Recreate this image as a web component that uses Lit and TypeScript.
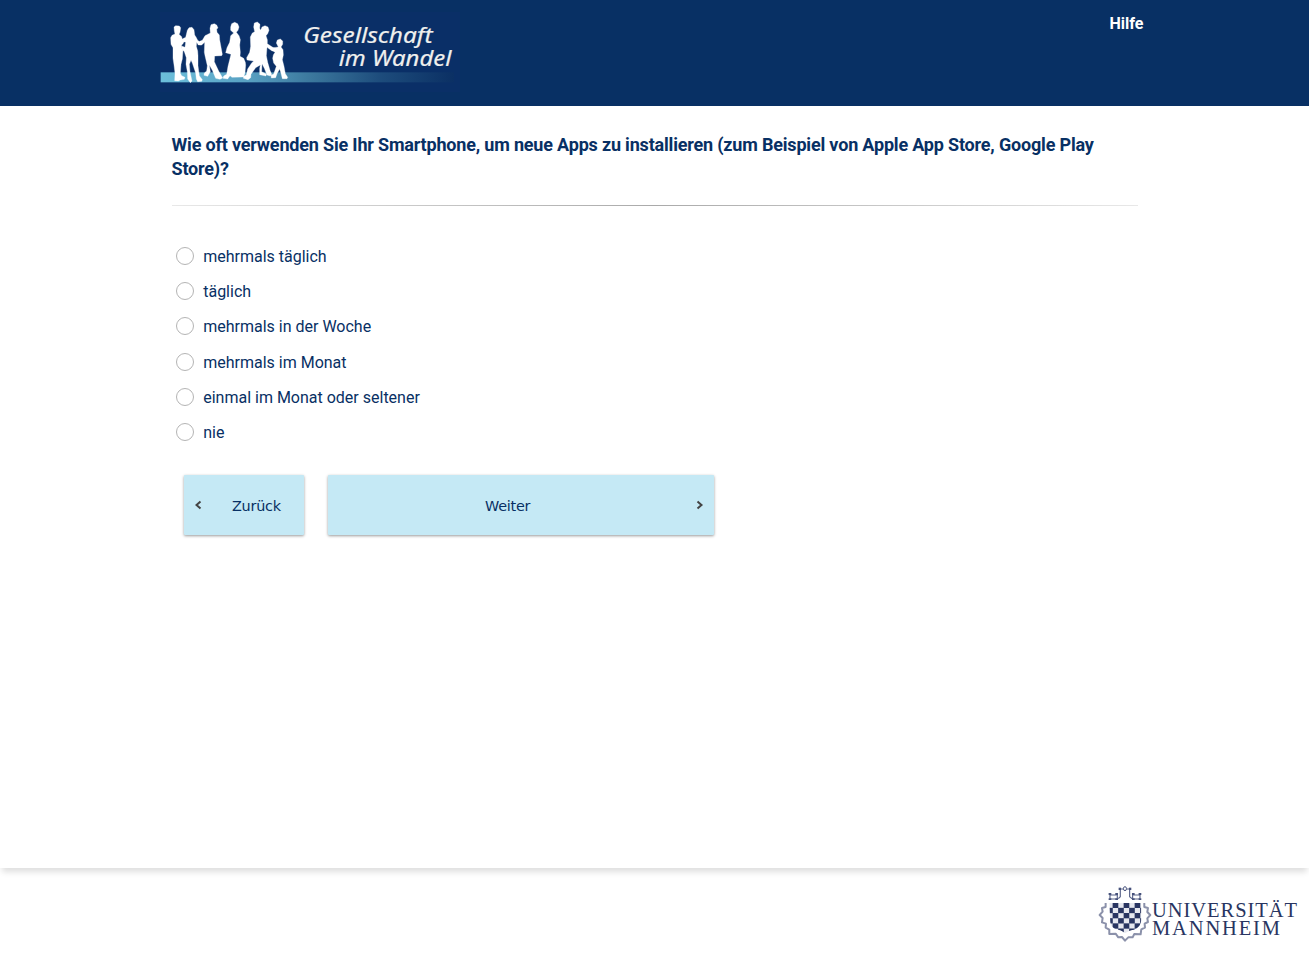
import { LitElement, html, css, svg } from "lit";
import { customElement, state } from "lit/decorators.js";

@customElement("wandel-logo")
class WandelLogo extends LitElement {
  static styles = css`
    :host { display: block; width: 300px; height: 80px; }
    svg { display: block; }
    .word { font: italic 400 64px "Noto Sans", "Open Sans", sans-serif; fill: #f0f0ee; stroke: #f0f0ee; stroke-width: .6; }
  `;
  render() {
    return html`<svg width="300" height="80" viewBox="15 21 900 240" role="img" aria-label="Gesellschaft im Wandel">
      <defs>
        <linearGradient id="band" x1="0" x2="1" y1="0" y2="0">
          <stop offset="0" stop-color="#6cbfdb"></stop>
          <stop offset=".3" stop-color="#58a0c2"></stop>
          <stop offset=".5" stop-color="#3d7a9f"></stop>
          <stop offset=".75" stop-color="#1d4c7c"></stop>
          <stop offset="1" stop-color="#0b3064"></stop>
        </linearGradient>
      </defs>
      <rect x="15" y="21" width="900" height="240" fill="#0a2f67"></rect>
      <rect x="17" y="202" width="880" height="30" fill="url(#band)"></rect>
      <g fill="#fff" stroke="#fff" stroke-width="1" stroke-linejoin="round">
        <path d="M57 66L62 62 73 63 77 68 75 82 72 88 80 95 82 104 88 108 84 116 80 120 79 128 84 134 82 162 78 178 76 205 80 212 90 217 88 223 76 225 70 228 59 227 60 205 57 180 54 160 54 128 48 118 47 98 51 91 60 87 58 78Z"></path>
        <path d="M97 76L102 68 111 67 117 74 119 90 123 96 128 106 136 112 142 112 138 120 130 120 125 112 124 124 128 138 129 152 129 182 133 212 142 224 140 229 128 230 124 222 122 204 112 174 108 166 103 178 105 200 111 228 106 233 98 222 97 200 93 178 94 158 88 140 78 130 80 123 90 127 92 112 86 110 80 103 92 97Z"></path>
        <path d="M165 70L168 59 178 56 185 60 189 69 185 72 186 82 193 90 194 104 202 148 200 152 179 153 178 170 191 198 203 219 195 223 182 220 172 196 163 180 166 200 158 214 147 211 148 204 155 198 157 182 150 152 148 142 149 112 140 120 130 118 134 109 142 106 150 92 166 84Z"></path>
        <path d="M227 66L230 56 239 52 248 56 252 66 249 76 244 82 252 92 256 104 254 120 256 142 255 154 266 160 271 172 272 180 270 204 266 216 231 217 225 212 218 222 204 220 206 213 215 208 219 184 228 148 212 143 216 128 224 112 227 92 236 84 227 76Z"></path>
        <path d="M296 66L298 54 307 51 315 58 314 70 317 76 321 66 330 62 339 66 342 76 338 86 333 92 337 104 337 116 352 126 366 133 364 142 350 137 336 127 334 152 338 172 345 196 350 208 346 213 336 210 328 190 321 176 320 200 334 207 333 213 314 209 314 190 316 180 302 188 288 208 287 218 279 224 265 220 266 214 274 210 278 192 290 174 296 168 276 165 275 158 284 142 287 124 286 96 292 84 299 80Z"></path>
        <path d="M364 114L367 105 376 102 383 108 383 118 378 126 384 134 385 150 382 164 387 184 391 206 398 217 396 221 382 221 378 205 374 192 366 206 362 218 349 219 348 211 356 207 364 184 356 174 353 160 355 150 360 142 354 136 356 128 370 126Z"></path>
      </g>
      <text class="word" x="445" y="114" textLength="388" lengthAdjust="spacingAndGlyphs">Gesellschaft</text>
      <text class="word" x="551" y="183" textLength="338" lengthAdjust="spacingAndGlyphs">im Wandel</text>
    </svg>`;
  }
}

@customElement("mannheim-logo")
class MannheimLogo extends LitElement {
  static styles = css`
    :host { display: block; }
    svg { display: block; }
    .name { font: 400 20.5px "Liberation Serif", serif; fill: #293561; }
  `;
  render() {
    const cells = [];
    for (let r = 0; r < 6; r++)
      for (let c = 0; c < 7; c++)
        if ((r + c) % 2 === 1) cells.push(svg`<rect x=${50.5 + c * 16.5} y=${83 + r * 15.5} width="17" height="16"></rect>`);
    return html`<svg width="212" height="62" viewBox="0 0 212 62" role="img" aria-label="Universität Mannheim">
      <g transform="translate(-6.7 -8) scale(.33333)">
        <defs><clipPath id="shield"><path d="M57 84H153V137Q150 157 131 164Q113 167 104 175Q98 167 83 164Q62 161 60 142Z"></path></clipPath></defs>
        <path d="M46 84V96L35 99 37 110 28 120 37 129 35 142 47 146 46 158 57 164 57 177 76 176 84 187 95 186 104 197 114 187 127 187 132 177 151 178 153 163 164 158 163 146 173 141 171 130 180 120 171 111 173 99 162 96V84" fill="none" stroke="#8b91aa" stroke-width="6" stroke-linejoin="round"></path>
        <g clip-path="url(#shield)"><rect x="50" y="80" width="110" height="100" fill="#e6e8ef"></rect><g fill="#293561">${cells}</g></g>
        <path d="M59 57V72H81V57M127 57V72H149V57M59 60H79M129 60H149M84 71L90 65V42H99M109 42H118V65L125 71" fill="none" stroke="#5a648a" stroke-width="3.5"></path>
        <ellipse cx="104" cy="41" rx="4.5" ry="6" fill="none" stroke="#46517b" stroke-width="3"></ellipse>
        <g fill="#46517b">
          <rect x="55" y="54" width="8" height="6"></rect><rect x="75" y="54" width="8" height="6"></rect>
          <rect x="125" y="54" width="8" height="6"></rect><rect x="145" y="54" width="8" height="6"></rect>
          <rect x="55" y="70" width="8" height="5"></rect><rect x="75" y="70" width="8" height="5"></rect>
          <rect x="125" y="70" width="8" height="5"></rect><rect x="145" y="70" width="8" height="5"></rect>
          <rect x="85" y="38" width="7" height="7"></rect><rect x="116" y="38" width="7" height="7"></rect>
        </g>
      </g>
      <text class="name" x="55" y="34" textLength="145" lengthAdjust="spacing">UNIVERSITÄT</text>
      <text class="name" x="55" y="52" textLength="128" lengthAdjust="spacing">MANNHEIM</text>
    </svg>`;
  }
}

@customElement("app-root")
class AppRoot extends LitElement {
  static styles = css`
    :host { display: flex; flex-direction: column; height: 954px; background: #fff; color: #083064; font: 16px/24px Roboto, sans-serif; overflow: hidden; }
    * { box-sizing: border-box; }
    header { height: 106px; flex: none; background: #083064; padding: 12px 165.6px 0 160px; display: flex; justify-content: space-between; }
    .help { color: #fff; font-weight: 700; text-decoration: none; height: 24px; }
    main { height: 762px; flex: none; padding: 27px 171px 0 171.5px; box-shadow: 0 6px 6px -2px rgba(0,0,0,.13); }
    h1 { margin: 0; font-size: 18px; line-height: 24px; font-weight: 700; height: 48px; letter-spacing: -.183px; }
    .rule { height: 1px; margin: 24px 0 33.3px; background: linear-gradient(90deg, #e8e8e8, #aaa 50%, #e8e8e8); }
    .options { display: grid; grid-auto-rows: 35.2px; }
    .option { display: flex; align-items: center; gap: 9.2px; padding-left: 4.5px; cursor: pointer; }
    .option span { padding-top: .3px; }
    .radio { appearance: none; width: 18px; height: 18px; margin: 0 0 1.6px; border: 1px solid #b4b4b4; border-radius: 50%; background: #fff; }
    .radio:checked { border: 5px solid #083064; }
    .actions { display: flex; gap: 24px; padding: 24.5px 0 0 12.5px; }
    .btn { height: 60px; border: 0; padding: 0; background: #c5e9f5; color: #083064; font: 14.4px "DejaVu Sans", sans-serif; letter-spacing: -.25px; box-shadow: 0 1px 3px rgba(0,0,0,.4); border-radius: 1px; display: flex; align-items: center; }
    .btn span { padding-top: 2px; }
    .back { width: 120px; padding-left: 11px; gap: 29px; }
    .next { width: 386px; padding: 0 10.5px 0 157px; justify-content: space-between; }
    .chev { width: 8px; height: 10px; margin-top: 1px; fill: none; stroke: #444; stroke-width: 2; }
    footer { flex: 1; display: flex; justify-content: flex-end; padding: 15px 0 0; }
  `;
  @state() private choice = -1;
  private options = ["mehrmals täglich", "täglich", "mehrmals in der Woche", "mehrmals im Monat", "einmal im Monat oder seltener", "nie"];
  render() {
    return html`
      <header><wandel-logo></wandel-logo><a class="help">Hilfe</a></header>
      <main>
        <h1>Wie oft verwenden Sie Ihr Smartphone, um neue Apps zu installieren (zum Beispiel von Apple App Store, Google Play Store)?</h1>
        <div class="rule"></div>
        <div class="options">
          ${this.options.map((o, i) => html`<label class="option"><input class="radio" type="radio" name="freq" .checked=${this.choice === i} @change=${() => (this.choice = i)} /><span>${o}</span></label>`)}
        </div>
        <div class="actions">
          <button class="btn back"><svg class="chev" viewBox="0 0 8 10"><path d="M5.5 1.5L1.5 5L5.5 8.5"></path></svg><span>Zurück</span></button>
          <button class="btn next"><span>Weiter</span><svg class="chev" viewBox="0 0 8 10"><path d="M1.5 1.5L5.5 5L1.5 8.5"></path></svg></button>
        </div>
      </main>
      <footer><mannheim-logo></mannheim-logo></footer>
    `;
  }
}
